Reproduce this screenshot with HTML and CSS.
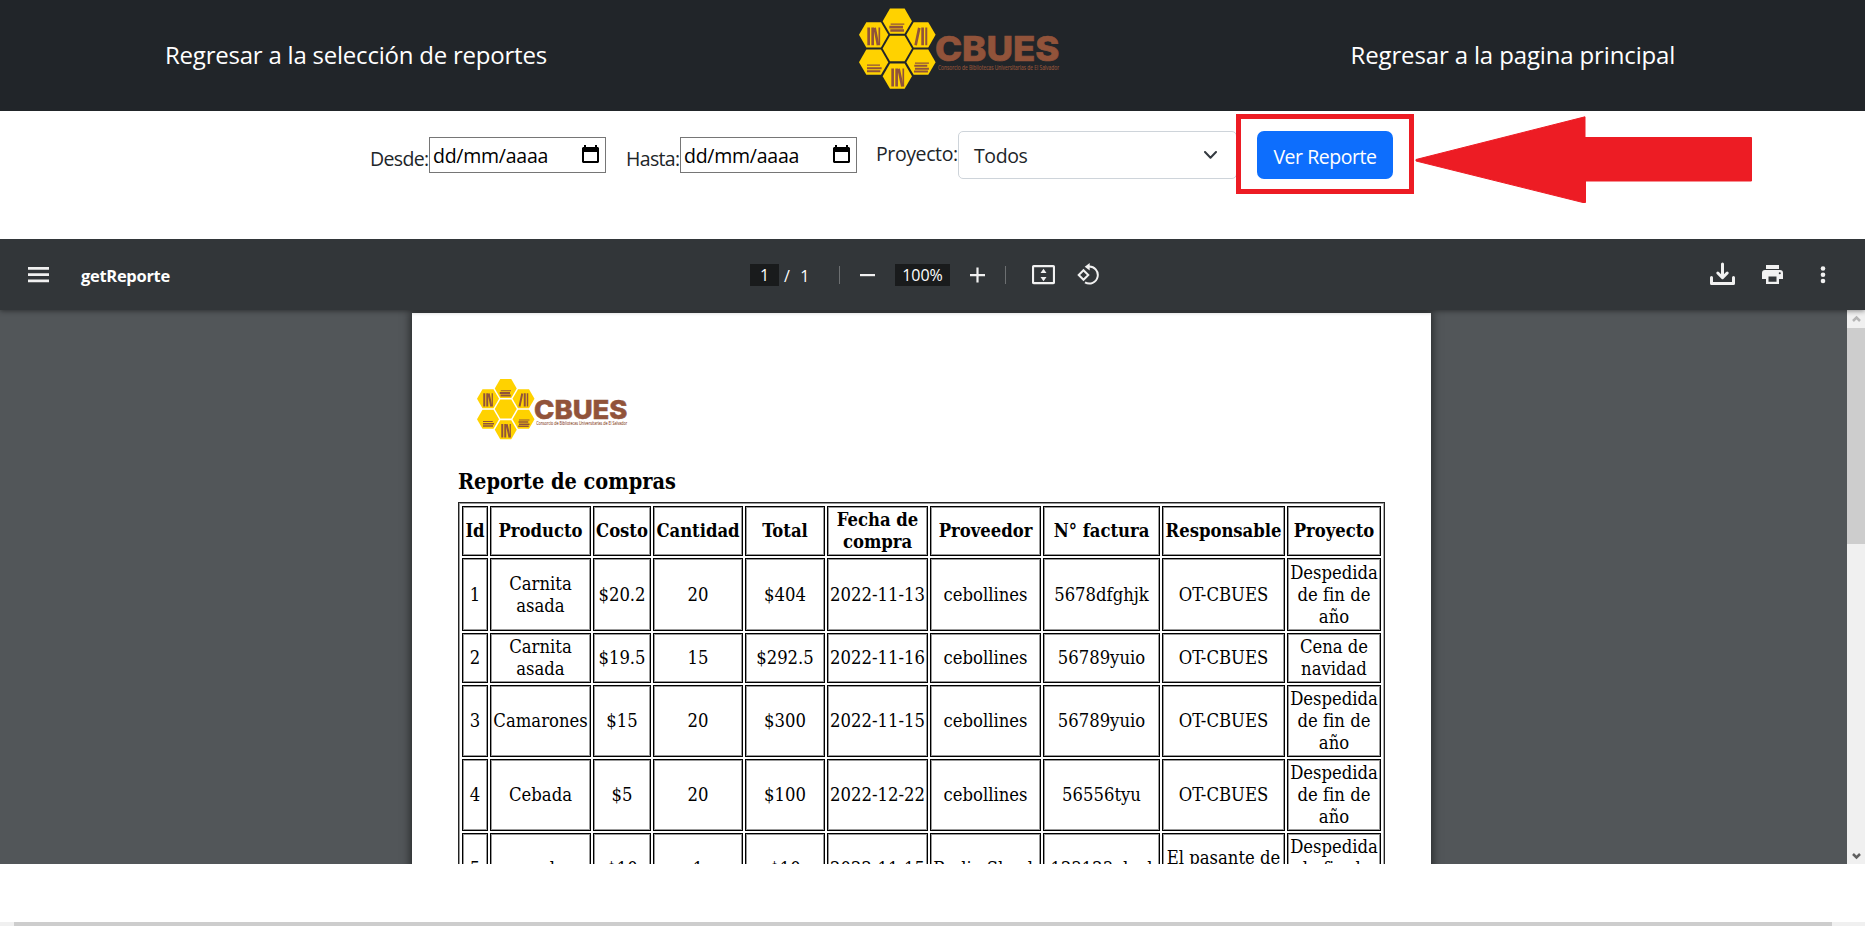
FILE: index.html
```html
<!DOCTYPE html>
<html lang="es">
<head>
<meta charset="utf-8">
<title>Reporte de compras</title>
<link rel="stylesheet" href="styles.css">
</head>
<body>
<svg class="defs" width="0" height="0">
  <symbol id="logo" viewBox="57 20 602 248">
    <g fill="#ffd200">
      <path id="hex" d="M128 62l22-38h44l22 38-22 38h-44z"/>
      <use href="#hex" y="82"/><use href="#hex" y="165"/>
      <use href="#hex" x="-71" y="41"/><use href="#hex" x="-71" y="123"/>
      <use href="#hex" x="71" y="41"/><use href="#hex" x="71" y="123"/>
    </g>
    <g stroke="#91533a" stroke-width="8" fill="none">
      <path stroke-width="4" d="M152 71h41"/><path d="M148 80h41M151 90h41"/>
      <path d="M86 81v53M98 81v53M104 82l10 52"/><path stroke-width="5" d="M118 81v53"/>
      <path d="M238 82l-11 52M248 81v53"/><path stroke-width="6" d="M259 81v53"/>
      <path stroke-width="4" d="M81 194h39M225 188h42"/><path stroke-width="6" d="M81 203h44M81 212h40M223 196h39M225 205h42M222 213h42"/>
      <path d="M158 204v54M170 204v54M176 205l11 53"/><path stroke-width="5" d="M190 204v54"/>
    </g>
    <text class="logo-name" x="285" y="182" textLength="374" lengthAdjust="spacingAndGlyphs">CBUES</text>
    <text class="logo-sub" x="294" y="208" textLength="364" lengthAdjust="spacingAndGlyphs">Consorcio de Bibliotecas Universitarias de El Salvador</text>
  </symbol>
</svg>
<header class="navbar">
  <a class="nav-link nav-left">Regresar a la selección de reportes</a>
  <svg class="nav-logo"><use href="#logo"/></svg>
  <a class="nav-link nav-right">Regresar a la pagina principal</a>
</header>
<form class="filters">
  <label class="label-desde">Desde:</label>
  <div class="date"><span>dd/mm/aaaa</span><svg width="17" height="19" viewBox="0 0 17 19"><path fill="#000" fill-rule="evenodd" d="M2 0h2v2h9V0h2v2h1l1 1v14l-1 1H1l-1-1V3l1-1h1zM2 7v9h13V7z"/></svg></div>
  <label class="label-hasta">Hasta:</label>
  <div class="date"><span>dd/mm/aaaa</span><svg width="17" height="19" viewBox="0 0 17 19"><path fill="#000" fill-rule="evenodd" d="M2 0h2v2h9V0h2v2h1l1 1v14l-1 1H1l-1-1V3l1-1h1zM2 7v9h13V7z"/></svg></div>
  <label class="label-proyecto">Proyecto:</label>
  <div class="select"><span>Todos</span><svg width="13" height="9" viewBox="0 0 13 9"><path d="M1 1l5.500 5.700L12 1" fill="none" stroke="#343a40" stroke-width="2" stroke-linecap="round" stroke-linejoin="round"/></svg></div>
  <div class="highlight"><button class="btn" type="button">Ver Reporte</button></div>
  <svg class="arrow" width="338" height="88" viewBox="0 0 338 88"><path fill="#ed1c24" stroke="#ed1c24" stroke-linejoin="round" d="M1 43.500L170 .8V21.500h166.500V65H170.500V86.500H168L1 45z"/></svg>
</form>
<section class="viewer">
  <div class="toolbar">
    <svg class="menu" width="21" height="16" viewBox="0 0 21 16"><path fill="#f1f1f1" d="M0 0h21v2.700H0zM0 6.200h21v2.700H0zM0 12.600h21v2.700H0z"/></svg>
    <span class="title">getReporte</span>
    <span class="page-no">1</span><span class="page-total">/&nbsp; 1</span>
    <i class="sep"></i>
    <svg class="minus" width="15" height="16" viewBox="0 0 15 16"><path fill="#f1f1f1" d="M0 7h15v2.200H0z"/></svg>
    <span class="zoom">100%</span>
    <svg class="plus" width="15" height="16" viewBox="0 0 15 16"><path fill="#f1f1f1" d="M0 7h6.400V.5h2.200V7H15v2.200H8.600v6.300H6.400V9.200H0z"/></svg>
    <i class="sep sep2"></i>
    <svg class="fit" width="23" height="20" viewBox="0 0 23 20"><rect x="1" y="1.200" width="21" height="17" rx="1" fill="none" stroke="#f1f1f1" stroke-width="2.200"/><path fill="#f1f1f1" d="M11.500 3.700l3 4.300h-6zM11.500 16.300l3-4.300h-6z"/></svg>
    <svg class="rotate" width="22" height="22" viewBox="0 0 22 22"><g fill="none" stroke="#f1f1f1" stroke-width="2"><path d="M6.500 7.200l4.800 4.800-4.800 4.800L1.700 12z"/><path d="M11.500 3.600A8.500 8.500 0 1 1 8 19.400"/></g><path fill="#f1f1f1" d="M12.700 0v7.600L7.700 3.800z"/></svg>
    <svg class="download" width="26" height="24" viewBox="0 0 26 24"><g fill="none" stroke="#f1f1f1" stroke-width="3" stroke-linecap="round" stroke-linejoin="round"><path d="M1.500 15.500V21.500H23.500V15.500"/><path d="M12.500 2V14M7.800 11l4.700 4.700 4.700-4.700"/></g></svg>
    <svg class="print" width="21" height="19" viewBox="0 0 21 19"><path fill="#f1f1f1" fill-rule="evenodd" d="M4 0h13v4H4zM3 5h15q3 0 3 3v6h-4v5H4v-5H0V8q0-3 3-3zM6.500 11.500v5.300h8v-5.300zM17.700 7.200a1 1 0 1 0 .1 2 1 1 0 0 0 0-2z"/></svg>
    <svg class="more" width="6" height="18" viewBox="0 0 6 18"><g fill="#f1f1f1"><circle cx="3" cy="2.500" r="2.300"/><circle cx="3" cy="8.800" r="2.300"/><circle cx="3" cy="15" r="2.300"/></g></svg>
  </div>
  <div class="canvas">
    <article class="page">
      <svg class="page-logo"><use href="#logo"/></svg>
      <h1>Reporte de compras</h1>
      <table>
        <colgroup><col class="c1"><col class="c2"><col class="c3"><col class="c4"><col class="c5"><col class="c6"><col class="c7"><col class="c8"><col class="c9"><col class="c10"></colgroup>
        <tr class="head"><th>Id</th><th>Producto</th><th>Costo</th><th>Cantidad</th><th>Total</th><th>Fecha de<br>compra</th><th>Proveedor</th><th>N° factura</th><th>Responsable</th><th>Proyecto</th></tr>
        <tr class="first"><td>1</td><td>Carnita<br>asada</td><td>$20.2</td><td>20</td><td>$404</td><td>2022-11-13</td><td>cebollines</td><td>5678dfghjk</td><td>OT-CBUES</td><td>Despedida<br>de fin de<br>año</td></tr>
        <tr class="head"><td>2</td><td>Carnita<br>asada</td><td>$19.5</td><td>15</td><td>$292.5</td><td>2022-11-16</td><td>cebollines</td><td>56789yuio</td><td>OT-CBUES</td><td>Cena de<br>navidad</td></tr>
        <tr class="tall"><td>3</td><td>Camarones</td><td>$15</td><td>20</td><td>$300</td><td>2022-11-15</td><td>cebollines</td><td>56789yuio</td><td>OT-CBUES</td><td>Despedida<br>de fin de<br>año</td></tr>
        <tr class="tall"><td>4</td><td>Cebada</td><td>$5</td><td>20</td><td>$100</td><td>2022-12-22</td><td>cebollines</td><td>56556tyu</td><td>OT-CBUES</td><td>Despedida<br>de fin de<br>año</td></tr>
        <tr class="tall"><td>5</td><td>prueba</td><td>$10</td><td>1</td><td>$10</td><td>2022-11-15</td><td>Radio Shack</td><td>123123ahsd</td><td>El pasante de<br>CBUES</td><td>Despedida<br>de fin de<br>año</td></tr>
      </table>
    </article>
    <div class="scrollbar">
      <svg width="18" height="18" viewBox="0 0 18 18"><path d="M6 11l3.500-3.500L13 11" fill="none" stroke="#b5b5b5" stroke-width="2.500"/></svg>
      <div class="thumb"></div>
      <svg width="18" height="18" viewBox="0 0 18 18"><path d="M6 8l3.500 3.500L13 8" fill="none" stroke="#606060" stroke-width="2.500"/></svg>
    </div>
  </div>
</section>
<div class="hscroll"><div class="hthumb"></div></div>
</body>
</html>
```
FILE: styles.css
```css
* { box-sizing: border-box; }
body { margin: 0; height: 926px; overflow: hidden; background: #fff; color: #212529; font-family: "Open Sans", "Noto Sans", sans-serif; display: flex; flex-direction: column; }
svg { display: block; flex: none; }
.defs { position: absolute; }
.logo-name { font: 800 104px Inter, sans-serif; fill: #91533a; stroke: #91533a; stroke-width: 2px; }
.logo-sub { font: 20px "Open Sans", sans-serif; fill: #91533a; stroke: #91533a; stroke-width: .4px; }
.navbar { height: 111px; flex: none; background: #212529; display: flex; align-items: flex-start; padding-left: 165px; }
.nav-link { color: #fff; font-size: 24px; line-height: 34px; margin-top: 38px; white-space: nowrap; }
.nav-left { width: 694px; letter-spacing: -0.22px; }
.nav-logo { width: 200.500px; height: 83px; margin-top: 7px; }
.nav-right { margin-left: 291px; letter-spacing: -0.14px; }
.filters { height: 128px; flex: none; display: flex; align-items: flex-start; padding-left: 370px; font-size: 19.500px; line-height: 30px; white-space: nowrap; }
.filters label { letter-spacing: -0.65px; }
.label-desde { width: 59px; margin-top: 33px; }
.label-hasta { width: 54px; margin: 33px 0 0 20px; }
.filters .label-proyecto { width: 82px; margin: 28px 0 0 19px; letter-spacing: -0.4px; }
.date { width: 177px; height: 36px; margin-top: 26px; border: 1px solid #767676; color: #000; padding: 0 6px 0 3px; display: flex; align-items: center; justify-content: space-between; }
.date span { margin-top: 2px; letter-spacing: -0.25px; }
.date svg { margin-top: -1px; }
.select { width: 279px; height: 48px; margin-top: 20px; border: 1px solid #ced4da; border-radius: 5px; display: flex; align-items: center; justify-content: space-between; padding: 2px 19px 0 15px; letter-spacing: -0.4px; }
.select svg { margin-top: -1px; }
.highlight { width: 178px; height: 80px; margin: 3px 0 0 -1px; border: 5px solid #ed1c24; padding: 12px 14px 12px 16px; position: relative; }
.btn { width: 136px; height: 48px; border: 0; border-radius: 7px; margin: 0; padding: 2px 0 0; display: block; background: #0d6efd; color: #fff; font: 19.500px "Open Sans", sans-serif; letter-spacing: -0.45px; white-space: nowrap; }
.arrow { margin: 5px 0 0 1px; }
.viewer { height: 625px; flex: none; display: flex; flex-direction: column; overflow: hidden; }
.toolbar { height: 71px; flex: none; background: #323639; color: #fff; display: flex; align-items: center; padding-left: 28px; position: relative; z-index: 2; box-shadow: 0 1px 5px rgba(0,0,0,.45); font-size: 16px; white-space: nowrap; }
.title { width: 668px; margin-left: 32px; font-weight: 700; font-size: 16.500px; letter-spacing: -0.3px; margin-top: 2px; }
.page-no { width: 29px; height: 22px; line-height: 23px; margin-left: 1px; text-align: center; background: #191b1c; }
.page-total { width: 55px; margin-left: 5px; margin-top: 2px; word-spacing: 1px; }
.sep { width: 1px; height: 18px; background: #6c6f71; }
.minus { margin-left: 20px; }
.zoom { width: 55px; height: 22px; line-height: 23px; margin-left: 20px; text-align: center; background: #191b1c; }
.plus { margin-left: 20px; }
.sep2 { margin-left: 20px; }
.fit { margin-left: 26px; }
.rotate { margin: -2px 0 0 22px; }
.download { margin: -1px 0 0 611px; }
.print { margin-left: 26px; }
.more { margin-left: 36.500px; }
.canvas { flex: 1; min-height: 0; background: #525659; display: flex; justify-content: space-between; padding-left: 412px; }
.page { width: 1019px; height: 700px; margin-top: 3px; padding: 65px 0 0 46px; background: #fff; box-shadow: 0 0 8px 2px rgba(0,0,0,.5); color: #000; font-family: "DejaVu Serif Condensed", "DejaVu Serif", serif; font-stretch: condensed; }
.page-logo { width: 150.500px; height: 62px; margin-left: 19px; }
h1 { font-size: 21.500px; line-height: 26px; margin: 29px 0 7px; white-space: nowrap; }
table { width: 927px; table-layout: fixed; border-collapse: separate; border-spacing: 2px; border: 1px solid #222; box-shadow: inset 1px 1px #999, inset -1px 0 #aaa; padding: 1px; font-size: 18.300px; line-height: 22px; text-align: center; white-space: nowrap; }
td, th { padding: 0; border: 1px solid #000; box-shadow: inset 0 0 0 1px #999; vertical-align: middle; }
.c1 { width: 26px; } .c2 { width: 101px; } .c3 { width: 58px; } .c4 { width: 90px; } .c5 { width: 80px; }
.c6 { width: 101px; } .c7 { width: 111px; } .c8 { width: 117px; } .c9 { width: 123px; } .c10 { width: 94px; }
.head { height: 50px; }
.first { height: 73px; }
.tall { height: 72px; }
.scrollbar { width: 18px; background: #f0f0f0; display: flex; flex-direction: column; }
.thumb { height: 216px; background: #cdcdcd; margin-bottom: auto; }
.hscroll { height: 4px; margin-top: auto; background: #f0f0f0; padding: 0 33px 0 14px; }
.hthumb { height: 4px; background: #cdcdcd; }
```
